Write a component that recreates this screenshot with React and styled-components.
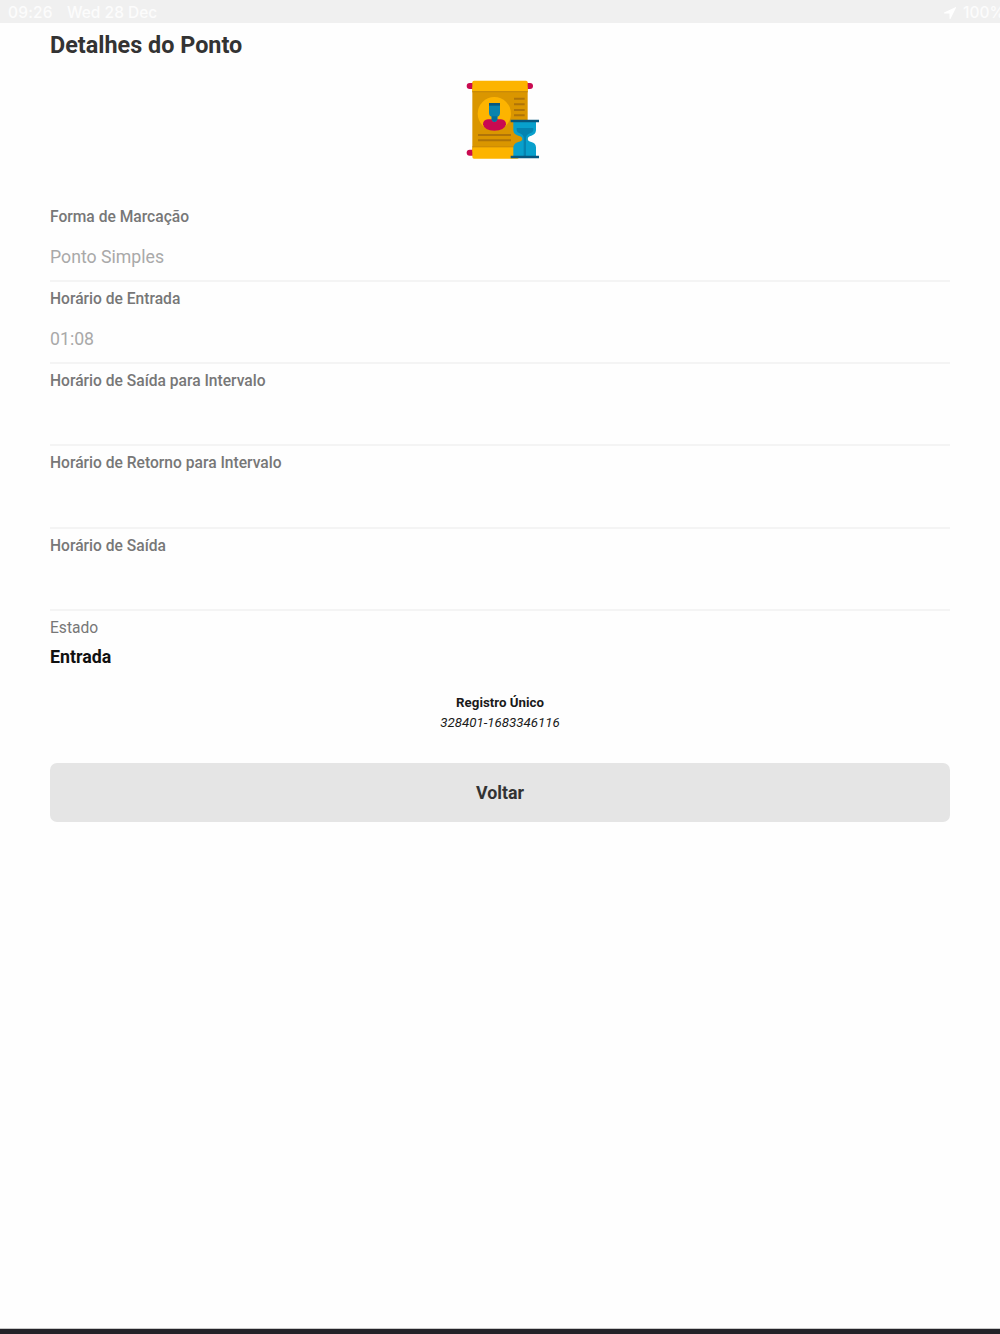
import React from "react";
import styled, { createGlobalStyle } from "styled-components";

const GlobalStyle = createGlobalStyle`
  * {
    box-sizing: border-box;
  }
  body {
    margin: 0;
    background: #fefefe;
    font-family: Roboto, "Liberation Sans", sans-serif;
  }
`;
const Screen = styled.div`
  display: flex;
  flex-direction: column;
  height: 1334px;
  overflow: hidden;
`;
const StatusBar = styled.header`
  display: flex;
  align-items: center;
  height: 23px;
  flex-shrink: 0;
  padding: 3px 0 0 8px;
  background: #f0f0f0;
  color: #fcfcfc;
  font-family: Inter, sans-serif;
  font-size: 15.5px;
  font-weight: 500;
  line-height: 20px;
  white-space: nowrap;
  overflow: hidden;
`;
const Clock = styled.span`
  width: 59px;
  letter-spacing: 0.2px;
`;
const Day = styled.span`
  flex: 1;
`;
const Battery = styled.div`
  display: flex;
  align-items: center;
  gap: 6px;
  width: 57px;
`;
const Content = styled.main`
  display: flex;
  flex-direction: column;
  flex: 1;
  padding: 0 50px;
`;
const Title = styled.h1`
  margin: 8px 0 21px;
  color: #333333;
  font-size: 23.4px;
  font-weight: 700;
  line-height: 28px;
`;
const Picture = styled.div`
  display: flex;
  justify-content: center;
  height: 80px;
  margin-bottom: 39.8px;
`;
const Field = styled.div`
  height: 82.2px;
  padding-top: 7px;
  border-bottom: 2px solid #f4f4f4;
`;
const Label = styled.div`
  color: #777777;
  font-size: 15.6px;
  font-weight: ${(props) => props.$weight || 500};
  line-height: 20px;
`;
const Value = styled.div`
  margin-top: 18px;
  color: #a9a9a9;
  font-size: 17.7px;
  line-height: 24px;
`;
const State = styled.div`
  padding-top: 7px;
`;
const StateValue = styled.div`
  margin-top: 7.5px;
  color: #111111;
  font-size: 17.8px;
  font-weight: 700;
  line-height: 24px;
`;
const Register = styled.div`
  margin-top: 23.5px;
  color: #1a1a1a;
  text-align: center;
  font-size: 13.3px;
  line-height: 20px;
`;
const BackButton = styled.button`
  height: 59.5px;
  margin-top: 30px;
  padding: 0;
  border: none;
  border-radius: 7px;
  background: #e5e5e5;
  color: #333333;
  font-family: inherit;
  font-size: 17.8px;
  font-weight: 700;
  cursor: pointer;
`;
const HomeBar = styled.footer`
  height: 6px;
  flex-shrink: 0;
  border-top: 1px solid #c8c8c8;
  background: #232228;
`;
const Arrow = styled.svg`
  flex-shrink: 0;
`;

const fields = [
  { label: "Forma de Marcação", value: "Ponto Simples" },
  { label: "Horário de Entrada", value: "01:08" },
  { label: "Horário de Saída para Intervalo", value: "" },
  { label: "Horário de Retorno para Intervalo", value: "" },
  { label: "Horário de Saída", value: "" },
];

const LocationIcon = () => (
  <Arrow width="14" height="14" viewBox="0 0 13 13" fill="#ffffff">
    <path d="M12 1 L1 6 Q0.5 6.8 1.5 6.9 L6 7 L6.1 11.6 Q6.3 12.6 7 11.8 L12.2 1.4 Z" />
  </Arrow>
);

const ScrollIcon = () => (
  <svg width="80" height="80" viewBox="15 30 240 240">
    <rect x="35" y="39" width="199" height="18" rx="9" fill="#c90a50" />
    <rect x="35" y="239" width="60" height="18" rx="9" fill="#c90a50" />
    <rect x="52" y="50" width="166" height="195" fill="#da9600" />
    <rect x="52" y="32" width="166" height="34" rx="5" fill="#fdb400" />
    <rect x="52" y="63" width="166" height="4" fill="#c98a08" />
    <rect x="52" y="231" width="140" height="35" rx="5" fill="#fdb400" />
    <rect x="52" y="229" width="125" height="3" fill="#c98a08" />
    <circle cx="118" cy="131" r="50" fill="#fdb400" />
    <path
      d="M99 148 H138 Q153 149 153 163 Q149 182 118 182 Q88 182 84 163 Q84 149 99 148Z"
      fill="#c90a50"
    />
    <path
      d="M102 99 H135 V128 Q135 138 127 140 V149 Q125 156 118 156 Q112 156 110 149 V140 Q102 138 102 128Z"
      fill="#0a83ad"
    />
    <path d="M102 99 H135 V107 H102Z" fill="#07577f" />
    <path d="M110 139 H127 V149 L118 156 L110 149Z" fill="#076c98" />
    <path
      d="M177 86 H209 M177 103 H209 M177 120 H209 M177 136 H209 M69 195 H168 M69 211 H168"
      stroke="#af7408"
      strokeWidth="6"
    />
    <path
      d="M175 154 H243 V181 Q242 194 229 197 Q218 200 218 207 Q218 213 229 216 Q242 219 243 232 V260 H175 V232 Q177 219 190 216 Q202 213 202 207 Q202 200 190 197 Q176 194 175 181Z"
      fill="#08a0cc"
    />
    <path
      d="M185 174 H235 V181 Q234 188 225 190 Q214 194 213 203 V260 H206 V203 Q205 194 194 190 Q186 188 185 181Z"
      fill="#0583b0"
    />
    <path d="M167 153 H252 M167 261 H252" stroke="#07577f" strokeWidth="8" />
  </svg>
);

const App = () => {
  return (
    <Screen>
      <GlobalStyle />
      <StatusBar>
        <Clock>09:26</Clock>
        <Day>Wed 28 Dec</Day>
        <Battery>
          <LocationIcon />
          <span>100%</span>
        </Battery>
      </StatusBar>
      <Content>
        <Title>Detalhes do Ponto</Title>
        <Picture>
          <ScrollIcon />
        </Picture>
        {fields.map((item) => (
          <Field key={item.label}>
            <Label>{item.label}</Label>
            <Value>{item.value}</Value>
          </Field>
        ))}
        <State>
          <Label $weight={400}>Estado</Label>
          <StateValue>Entrada</StateValue>
        </State>
        <Register>
          <strong>Registro Único</strong>
          <br />
          <em>328401-1683346116</em>
        </Register>
        <BackButton>Voltar</BackButton>
      </Content>
      <HomeBar />
    </Screen>
  );
};

export default App;
